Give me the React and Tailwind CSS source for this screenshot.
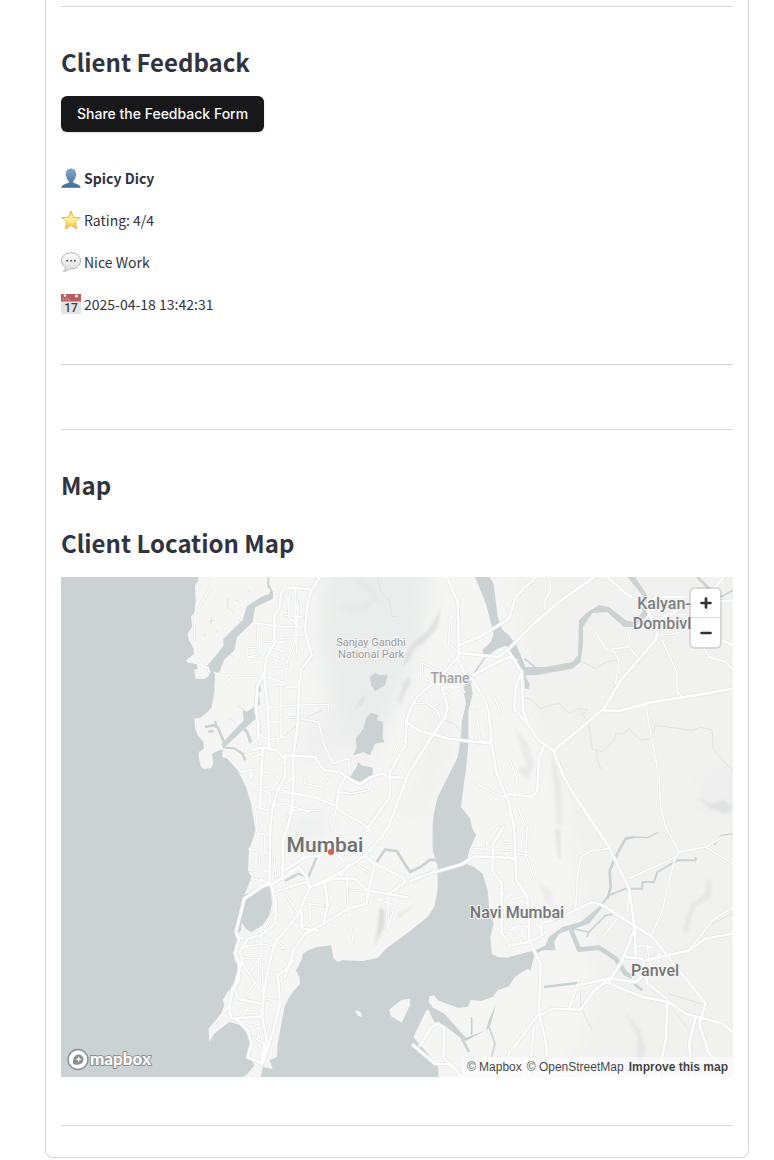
import React from "react";

/* Map geometry is drawn on a grid three times finer than the visible map. */
const LAND = [
  "M412,0 412,12 402,25 404,70 400,110 390,118 393,150 380,170 383,188 398,215 398,232 375,250 380,257 408,262 410,275 400,278 403,305 430,306 443,298 447,280 438,268 487,208 487,185 545,130 558,88 600,60 625,50 628,40 618,28 620,0Z",
  "M625,0 624,22 636,45 636,65 600,82 582,92 575,135 528,180 520,220 490,248 475,285 462,290 460,345 452,390 440,405 415,424 400,424 403,455 410,475 428,495 428,515 414,525 413,540 420,570 430,576 450,573 457,560 453,530 475,520 485,517 483,540 500,545 530,580 555,630 570,680 580,740 583,755 578,780 565,815 562,885 572,900 550,955 600,928 628,928 633,980 625,1015 605,1045 570,1065 555,1055 542,1037 540,1060 525,1075 535,1090 520,1130 520,1150 530,1165 530,1200 532,1215 515,1230 500,1245 485,1268 490,1285 480,1310 443,1355 445,1395 460,1370 505,1335 540,1345 565,1380 570,1410 560,1440 575,1455 580,1465 560,1490 545,1500 600,1500 605,1470 635,1475 625,1450 648,1440 650,1400 665,1320 672,1285 685,1260 695,1245 718,1220 715,1200 705,1180 722,1150 725,1130 745,1118 770,1110 810,1105 818,1145 830,1155 845,1150 905,1152 950,1143 975,1115 1050,1060 1100,1020 1120,990 1130,940 1130,870 1115,820 1115,750 1118,710 1130,660 1160,600 1190,540 1200,480 1203,430 1215,380 1208,345 1213,320 1235,290 1270,240 1265,220 1290,195 1298,170 1275,80 1242,0Z",
  "M1285,0 1298,20 1310,120 1325,160 1350,200 1310,215 1275,240 1245,285 1230,320 1235,350 1222,400 1222,500 1215,580 1210,610 1200,690 1228,725 1232,750 1245,775 1225,820 1215,860 1240,870 1265,890 1280,940 1285,1000 1298,1040 1288,1080 1292,1130 1310,1140 1344,1142 1420,1120 1420,1135 1410,1170 1375,1190 1355,1205 1344,1228 1310,1240 1295,1260 1260,1272 1230,1268 1220,1290 1190,1292 1130,1270 1120,1255 1105,1258 1103,1275 1115,1290 1095,1302 1057,1380 1100,1430 1132,1470 1132,1500 2016,1500 2016,0Z",
  "M882,1298 900,1306 903,1320 890,1316Z",
  "M984,1298 1022,1268 1047,1265 1047,1285 1022,1337 990,1318Z",
];

const WATER_AREAS = [
  "M583,388 585,425 550,455 497,505 487,515 482,500 548,430 545,400 558,404Z",
  "M927,300 942,288 960,295 980,293 972,325 942,343 930,325Z",
  "M917,420 930,407 952,415 947,430 967,435 965,480 970,495 942,500 927,535 907,525 877,535 887,510 884,485 907,455Z",
  "M892,555 900,565 935,572 935,597 907,618 877,608 867,600 884,575Z",
  "M1300,150 1325,160 1344,175 1364,200 1394,270 1454,270 1534,255 1551,235 1554,130 1580,105 1614,85 1644,90 1694,130 1719,135 1744,105 1744,55 1699,0 1722,0 1756,50 1759,115 1719,150 1689,150 1639,105 1594,108 1566,150 1566,200 1559,255 1534,275 1424,295 1389,295 1364,260 1335,205 1310,205 1277,235 1267,215 1297,195Z",
  "M1389,290 1406,320 1404,335 1392,335Z",
  "M1344,1140 1404,1125 1424,1120 1454,1105 1464,1080 1504,1050 1559,1035 1614,990 1629,985 1584,1040 1544,1053 1494,1070 1479,1095 1484,1120 1444,1120 1419,1135 1409,1180 1384,1170 1344,1225Z",
  "M1102,1298 1112,1290 1150,1310 1205,1372 1215,1382 1275,1360 1283,1330 1305,1280 1290,1340 1282,1355 1215,1392 1195,1380 1150,1345 1120,1335Z",
];

const WATER_LINES = [
  [8, "M432,450 455,445 470,450 490,498 M442,463 458,462 M463,432 466,450"],
  [9, "M545,452 558,465 570,498"],
  [7, "M490,512 520,514 545,530 553,550"],
  [5, "M595,320 597,345 M592,360 595,385 M594,430 597,475"],
  [8, "M947,855 972,818 1007,822 1047,885 1082,868 1107,848 1130,850"],
  [7, "M672,912 712,890 742,900 767,840"],
  [5, "M1232,1320 1232,1375 M1282,1345 1302,1400 1292,1440"],
  [8, "M1202,1382 1224,1425"],
  [8, "M1909,0 1944,35"],
  [5, "M1979,60 2016,40"],
  [6, "M1615,990 1644,955 1694,935 1744,935 1744,915 1779,915 1789,885 1824,865 1850,850 1904,850 1904,840"],
  [8, "M1640,965 1649,930 1646,880 1669,830 1694,785 1719,780"],
  [4, "M1719,780 1760,782 1794,765 M1960,805 1980,775 2016,770"],
  [14, "M1530,1058 1554,1118 1614,1112 1664,1145 1694,1190 1714,1200"],
  [5, "M1534,1055 1584,1065 1634,1015 1654,1012 M1584,1065 1578,1080 M1390,245 1424,272"],
  [8, "M1449,1230 1549,1218 M1719,1220 1744,1240"],
  [12, "M1213,325 1222,360"],
];

const MAJOR = [
  "M672,30 660,50 655,95 640,115 640,200 615,245 610,300 620,390 625,515",
  "M610,285 588,330 585,400 592,440 592,480 575,500",
  "M570,520 600,512 620,515 645,520 672,545 672,600 650,640 635,690 628,750 625,920",
  "M605,515 597,690",
  "M672,30 752,38 777,0 M752,38 740,75 732,160 752,235 722,275 714,320 710,440 697,540 697,640 692,700 680,750 665,790 665,905",
  "M672,535 762,540 787,578 837,585 872,610 897,622 922,605 962,588 982,600 1027,602",
  "M672,645 762,660 827,688 842,705 907,740 930,765",
  "M1157,0 1190,75 1194,230 1187,245 1127,310 1072,355 1052,385 1035,435 1035,500 987,585 987,660 922,750",
  "M1194,205 1260,178 1344,125",
  "M1194,228 1312,240 1344,215 1424,135 1494,75 1599,0",
  "M1192,250 1212,290 1237,310 1272,370 1284,410 1292,500 1307,590 1344,680 1359,750 1366,910 1399,960 1406,1095 1439,1160 1434,1310 1344,1430 1330,1500",
  "M1237,295 1290,265 1344,240 1364,250",
  "M1142,330 1160,390 1152,420 1112,480 1042,590 982,750 962,780 912,835 832,890 747,930 712,1010 672,1060",
  "M1035,435 1072,460 1162,485 1287,500",
  "M852,600 832,640 827,690",
  "M1344,225 1382,285 1364,330 1359,395 1404,445 1429,485 1477,522",
  "M1382,285 1386,400 1404,445",
  "M1477,522 1629,395 1679,310 1784,190 1789,165 1769,120 1759,95",
  "M1477,522 1509,600 1544,660 1604,750 1644,810 1704,935 1722,1060 1724,1135",
  "M1624,400 1674,402 1774,375 1934,350 2016,335",
  "M1449,508 1434,540 1429,640 1414,660 1344,650",
  "M1639,0 1694,50 1759,85 1784,60 1874,60",
  "M1344,125 1364,60 1424,0 M1989,0 1944,50 M1789,130 1889,80 2016,70 M1984,190 2016,205",
  "M625,920 605,928 550,965 525,1065 530,1080 545,1085",
  "M660,905 630,925 645,975 643,1040 600,1075 560,1085 535,1125 545,1150 520,1230 530,1265 600,1280",
  "M535,1085 522,1130 535,1160 532,1215 515,1235 505,1290 510,1325 605,1318",
  "M672,1060 640,1100 620,1180 610,1240 603,1320 618,1390 600,1460",
  "M697,1150 672,1180 650,1195 658,1280 625,1400 605,1460 560,1440 572,1400 560,1360 525,1325",
  "M672,935 732,915 747,930 737,900 712,870 672,900",
  "M792,920 800,985 787,1040 732,1070 697,1120 672,1200",
  "M787,1040 862,995 917,980 922,940 942,860 1022,900 1034,915 982,950",
  "M747,930 822,905 882,905 917,940 1042,962 M912,835 937,860 M672,880 732,840 782,835 M812,820 852,855",
  "M722,1005 722,1055 772,1060",
  "M1327,750 1297,800 1294,880 1322,920 1322,1070 1344,1095",
  "M1047,912 1112,888 1202,862 1242,838 1344,842 1366,850",
  "M1057,1405 1122,1460 1172,1462 1202,1500",
  "M1077,1405 1112,1350 1132,1340 1150,1355 1147,1440 1172,1470",
  "M1439,1315 1474,1295 1559,1298 1600,1240 1634,1215 1744,1260 1824,1275 1874,1310 1984,1340 2016,1365",
  "M1499,1020 1594,975 1624,985 1774,1080 1934,1280 1914,1340 1944,1430 2000,1480",
  "M1719,1060 1684,1150 1644,1215",
  "M1754,1150 1884,1120 1934,1085 2016,1070",
  "M1694,1140 1744,1145 1759,1220 1819,1265",
  "M1524,1295 1549,1225 1644,1205 1724,1215 1754,1190",
  "M1819,1280 1814,1390 1790,1500 M1904,1320 1884,1400 1894,1500",
  "M1419,1350 1404,1500 M1434,1310 1454,1390 1462,1500",
  "M1344,1105 1406,1095 1444,1075 1439,1040 1499,1020",
];

const MINOR = [
  "M448,0 450,30 415,90 402,110 400,190 405,235 425,268 440,272 445,285",
  "M462,288 480,295 610,295 M515,295 498,318",
  "M565,158 580,138 672,150 M590,140 590,235 558,240 558,212 590,212 M610,193 672,195",
  "M560,240 610,245 M640,215 672,225 M625,240 672,262 M645,255 645,270 672,272",
  "M620,300 672,318 M660,320 660,480 650,490 650,520 M620,325 672,322 M620,390 672,388 M620,435 660,435 M595,470 620,488 672,480",
  "M552,520 575,540 605,530 M500,540 540,585 570,578 640,590 655,610 M565,580 570,605 575,585",
  "M580,640 672,640 M585,690 620,700 628,650 610,640 M583,690 590,750 M672,680 640,685",
  "M672,60 712,90 702,200 M687,35 682,120 717,150 677,260 M672,185 737,185 M702,30 707,230 M672,115 725,120 M672,150 730,148 M715,40 700,130",
  "M672,330 712,330 M672,385 802,382 802,395 M672,420 708,422 M680,265 672,300 M672,570 694,575 M700,600 672,620 M672,680 692,690",
  "M717,425 772,435 792,510 817,560 862,545 867,590",
  "M732,600 732,620 782,630 802,600 M827,688 837,645 872,650 922,640 934,610 M692,700 782,700 M812,750 827,690 M682,710 700,690 745,705",
  "M1167,120 1162,200 1192,225 M1167,120 1190,122 M1082,258 1142,285 M1084,258 1084,305 1122,320 M1057,380 1102,380 1127,400 1137,420",
  "M1100,355 1095,375 1115,390 1130,380 M1142,330 1200,330 1210,345 M1180,330 1150,355 M1165,265 1185,300 1180,330",
  "M1242,400 1252,450 1257,490 1287,495 M1300,360 1320,410 M1247,620 1322,660 1344,655 M997,530 1012,495 1037,490",
  "M1804,190 1849,290 1849,345 1864,360 M1754,385 1794,600 1799,690 1814,750",
  "M1664,320 1674,250 1654,215 1704,210 1729,240 M1604,165 1634,215 1654,225 M1699,165 1709,195 1699,210",
  "M1464,0 1469,40 1452,70 1452,100 M1944,240 1994,255 2016,280 M1930,215 1945,240 M1344,540 1354,570 1369,610 1355,650 1394,750 M1344,700 1359,750 M1789,175 1844,170 1889,150 M1784,115 1890,112",
  "M585,750 590,770 625,775 M565,815 620,830 M568,815 565,880 620,882 M595,835 595,880 M572,905 620,915 M575,925 605,905 M610,770 612,825",
  "M640,850 645,900 M640,945 672,935 M545,1110 600,1100 665,1115 M545,1145 600,1145 M540,1150 580,1215 605,1250 M600,1060 600,1135 565,1190",
  "M605,1155 605,1310 M540,1270 580,1220 M550,1300 605,1300 M610,1265 655,1275 M500,1290 450,1355 462,1362 505,1330 M550,1340 570,1350 595,1340 590,1390 M575,1380 610,1400 600,1440 M618,1190 650,1190 M600,1050 672,1115 M540,1320 560,1290",
  "M637,935 638,1000 612,1050 580,1075",
  "M817,780 887,780 922,760 M887,865 922,885 M822,860 842,895 862,860 M857,900 862,1000 877,1095 M937,965 1007,965 997,1000 982,1050 M982,950 982,1060 M942,965 1007,985 M867,940 917,940 M732,980 787,985 M747,980 747,1030 722,1050 M672,950 712,1010 M980,980 1000,982",
  "M1237,815 1344,820 M1312,750 1277,800 1277,840 M1325,800 1344,800 M1322,950 1344,950",
  "M1644,815 1594,820 1559,840 1549,900 1544,990 M1704,905 1844,840 1854,825 1814,750 M1854,825 1934,810 1984,780 M1844,840 1824,910 1804,1000 1769,1080",
  "M1534,990 1554,998 M1344,840 1366,845 M1399,750 1394,835 1419,905 M1719,1105 1774,1110 M1754,1080 1774,1200 M1934,810 2016,860 M2016,990 1954,1030 1924,1070 1884,1120",
  "M1344,950 1394,980 M1344,1030 1384,1100 M1629,1075 1669,1025 M1704,940 1699,1020 M1344,970 1394,955 M1370,830 1400,835 M1345,1060 1375,1045 1400,1050 M1370,990 1390,960 M1420,1035 1445,1060 M1770,1150 1800,1130",
];

const FINE =
  "M1389,360 1414,370 1439,395 1464,385 1494,380 1524,410 1554,395 1584,440 1594,515 1624,525 1660,490 1664,470 1690,470 1704,455 1739,490 1769,485 1784,445 1894,460 1920,450 1954,460 1956,515 2016,585 M1564,255 1604,275 1634,255 1669,250 M1606,520 1609,550 1619,575 M1560,395 1580,400 1560,415 M672,475 722,430 782,400 M950,0 960,45 987,75 992,118 1007,118 M1150,430 1180,440 1200,465 M1559,1240 1559,1290 1594,1360 M1824,1250 1919,1280 1934,1270 M1834,1295 1884,1360 M1954,1040 2016,1010 M500,65 500,90 515,103 M452,120 450,140 M445,133 460,130 M465,158 470,165 M430,170 432,178 M525,70 535,74 M560,40 568,43 M510,235 515,240 M535,130 540,135 M530,385 550,400 M507,425 525,440";

const HILLS = [
  ["#eaedeb", "M790,-60 1110,-60 1090,140 1050,260 1000,400 920,560 850,500 800,350 770,180Z"],
  ["#f1f1f0", "M1120,330 1190,420 1150,600 1110,700 1020,740 1060,560Z"],
  ["#f1f1f0", "M1350,-60 2080,-60 2080,1560 1500,1560 1600,1240 1560,960 1500,640 1400,420Z"],
  ["#eeefee", "M700,480 800,400 870,440 830,560 760,560Z"],
  ["#edeeed", "M1960,580 2060,560 2060,720 1960,680 1900,670Z"],
  ["#ebeded", "M672,740 805,705 800,765 690,790Z"],
];

const RIDGES = [
  ["#dfe1e0", "M1140,90 1130,150 1085,200 1060,215 1045,250 1025,270 1035,230 1060,190 1100,165Z"],
  ["#dfe1e0", "M1045,300 1050,315 1030,350 1015,385 1012,370 1030,315Z"],
  ["#dcdedd", "M905,355 915,360 900,385 880,400 895,375Z"],
  ["#dbdddc", "M955,990 972,1000 970,1050 950,1090 940,1110 950,1050Z"],
  ["#e7e8e7", "M1470,540 1482,560 1500,620 1502,740 1488,750 1482,650Z"],
  ["#e9eae9", "M1360,450 1400,500 1420,560 1400,610 1370,580 1395,560 1375,500Z"],
  ["#e0e2e1", "M1904,660 1950,680 1990,670 2016,690 2000,710 1950,695Z"],
  ["#e5e7e6", "M1480,755 1500,755 1500,850 1490,840Z"],
  ["#e5e7e6", "M1940,900 1955,920 1950,960 1900,990 1880,1070 1865,1060 1890,980 1930,950Z"],
  ["#e5e7e6", "M1690,1300 1740,1360 1755,1420 1740,1470 1725,1440 1730,1380Z"],
  ["#ecedec", "M1430,910 1470,940 1480,1000 1455,980Z"],
  ["#e6e9e7", "M830,90 900,80 950,60 920,100 870,110Z"],
  ["#e6e9e7", "M870,0 930,20 970,90 930,60Z"],
  ["#e6e8e7", "M1010,1010 1060,985 1050,995 1010,1025Z"],
];

const LABELS = [
  { text: "Sanjay Gandhi", x: 310, y: 69, cls: "text-[11px] fill-[#9c9e9e] font-normal" },
  { text: "National Park", x: 310, y: 81, cls: "text-[11px] fill-[#9c9e9e] font-normal" },
  { text: "Thane", x: 389, y: 106, cls: "text-[14px] fill-[#a2a4a4]" },
  { text: "Kalyan-", x: 603, y: 32, cls: "text-[16px] fill-[#7d7f7f]" },
  { text: "Dombivli", x: 603, y: 52, cls: "text-[16px] fill-[#7d7f7f]" },
  { text: "Mumbai", x: 264, y: 275, cls: "text-[21px] fill-[#6f7171]" },
  { text: "Navi Mumbai", x: 456, y: 341, cls: "text-[16px] fill-[#747676]" },
  { text: "Panvel", x: 594, y: 399, cls: "text-[16px] fill-[#747676]" },
];

function MapDrawing() {
  return (
    <svg
      viewBox="0 0 672 500"
      preserveAspectRatio="xMidYMid slice"
      className="block h-full w-full"
      role="img"
      aria-label="Map of Mumbai"
    >
      <defs>
        <filter id="soft" x="-20%" y="-20%" width="140%" height="140%">
          <feGaussianBlur stdDeviation="28" />
        </filter>
        <filter id="ridge" x="-30%" y="-30%" width="160%" height="160%">
          <feGaussianBlur stdDeviation="5" />
        </filter>
        <clipPath id="land">
          {LAND.map((d) => (
            <path key={d} d={d} />
          ))}
        </clipPath>
      </defs>
      <rect width="672" height="500" fill="#cad2d3" />
      <g transform="scale(0.333333)" strokeLinejoin="round" strokeLinecap="round">
        <g fill="#f5f5f4">
          {LAND.map((d) => (
            <path key={d} d={d} />
          ))}
        </g>
        <g clipPath="url(#land)">
          <g filter="url(#soft)">
            {HILLS.map(([c, d]) => (
              <path key={d} d={d} fill={c} />
            ))}
          </g>
          <g filter="url(#ridge)">
            {RIDGES.map(([c, d]) => (
              <path key={d} d={d} fill={c} />
            ))}
          </g>
        </g>
        <g fill="#cad2d3">
          {WATER_AREAS.map((d) => (
            <path key={d} d={d} />
          ))}
        </g>
        <g fill="none" stroke="#cad2d3" strokeLinecap="butt">
          {WATER_LINES.map(([w, d]) => (
            <path key={d} d={d} strokeWidth={w} />
          ))}
        </g>
        <path d={FINE} fill="none" stroke="#d8dcdc" strokeWidth="2" />
        <g fill="none" stroke="#e6e9e9">
          {MINOR.map((d) => (
            <path key={d} d={d} strokeWidth="8" />
          ))}
          {MAJOR.map((d) => (
            <path key={d} d={d} strokeWidth="12" />
          ))}
        </g>
        <g fill="none" stroke="#ffffff">
          {MINOR.map((d) => (
            <path key={d} d={d} strokeWidth="4" />
          ))}
          {MAJOR.map((d) => (
            <path key={d} d={d} strokeWidth="7" />
          ))}
        </g>
      </g>
      <g
        className="font-['Roboto',sans-serif] font-medium"
        textAnchor="middle"
        stroke="#f5f5f4"
        strokeWidth="2"
        strokeLinejoin="round"
        paintOrder="stroke"
      >
        {LABELS.map((l) => (
          <text key={l.text} x={l.x} y={l.y} className={l.cls}>
            {l.text}
          </text>
        ))}
      </g>
      <circle cx="270" cy="275" r="3" fill="#d9604c" />
    </svg>
  );
}

function MapboxLogo() {
  return (
    <svg viewBox="0 0 88 23" className="block h-[23px] w-[88px]" role="img" aria-label="Mapbox logo">
      <circle cx="11" cy="11.5" r="10" fill="#fff" stroke="#899192" strokeWidth="1.4" />
      <path
        d="M6.2 16.3C5.6 12.800 6 9.900 8 7.900A5 5 0 0 1 15 7.900A5 5 0 0 1 15 14.900C13 16.800 9.800 17 6.200 16.300Z"
        fill="#899192"
      />
      <path d="M11.700 8.200 12.600 10.400 14.800 11.300 12.600 12.200 11.700 14.400 10.800 12.200 8.600 11.300 10.800 10.400Z" fill="#fff" />
      <text
        x="23"
        y="17"
        className="fill-white font-['Lato',sans-serif] text-[17px] font-black"
        stroke="#899192"
        strokeWidth="2"
        strokeLinejoin="round"
        paintOrder="stroke"
      >
        mapbox
      </text>
    </svg>
  );
}

function PersonIcon() {
  return (
    <svg viewBox="0 0 20 20" className="h-5 w-5 shrink-0" aria-hidden="true">
      <defs>
        <linearGradient id="person" x1="0" y1="0" x2="0" y2="1">
          <stop offset="0" stopColor="#83a9ca" />
          <stop offset="1" stopColor="#416f99" />
        </linearGradient>
      </defs>
      <path
        d="M10 .4C6.700.4 4.900 2.700 5 5.900C4.400 6.300 4.600 7.900 5.300 8.500C5.700 10.700 6.600 12.200 7.700 13.100V14.700C6 15.500 1 16.100.3 19.700H19.700C19 16.100 14 15.500 12.300 14.700V13.100C13.400 12.200 14.300 10.700 14.700 8.500C15.400 7.900 15.600 6.300 15 5.900C15.100 2.700 13.300.4 10 .4Z"
        fill="url(#person)"
      />
    </svg>
  );
}

function StarIcon() {
  return (
    <svg viewBox="0 0 20 20" className="h-5 w-5 shrink-0" aria-hidden="true">
      <defs>
        <linearGradient id="star" x1="0" y1="0" x2="0" y2="1">
          <stop offset="0" stopColor="#ffd84a" />
          <stop offset=".5" stopColor="#fff3a0" />
          <stop offset="1" stopColor="#fbb828" />
        </linearGradient>
      </defs>
      <path
        d="M10 .9 12.500 7.300 19.400 7.600 14 12 15.900 18.900 10 15.200 4.100 18.900 6 12 .6 7.600 7.500 7.300Z"
        fill="url(#star)"
        stroke="#e9a72b"
        strokeWidth=".8"
        strokeLinejoin="round"
      />
    </svg>
  );
}

function SpeechIcon() {
  return (
    <svg viewBox="0 0 20 20" className="h-5 w-5 shrink-0" aria-hidden="true">
      <defs>
        <linearGradient id="speech" x1="0" y1="0" x2="0" y2="1">
          <stop offset="0" stopColor="#ffffff" />
          <stop offset="1" stopColor="#dcdcdc" />
        </linearGradient>
      </defs>
      <path
        d="M10 .8C4.500.8.5 4.200.5 8.700C.5 11.700 2.200 14.300 4.800 15.700C4.700 17.300 3.700 18.500 2.300 19.300C5 19.300 7 18.300 8.300 16.800C15 17.300 19.500 13.600 19.500 8.700C19.500 4.200 15.500.8 10 .8Z"
        fill="url(#speech)"
        stroke="#a9a9a9"
        strokeWidth=".9"
      />
      <circle cx="6.200" cy="8.800" r=".95" fill="#555" />
      <circle cx="10" cy="8.800" r=".95" fill="#555" />
      <circle cx="13.800" cy="8.800" r=".95" fill="#555" />
    </svg>
  );
}

function CalendarIcon() {
  return (
    <svg viewBox="0 0 20 20" className="h-5 w-5 shrink-0" aria-hidden="true">
      <rect width="20" height="20" fill="#e4e4e4" />
      <rect width="20" height="7.500" fill="#b85f61" />
      <path d="M2.500 6V4M5 6V4M7.300 4V6H9" stroke="#d29a9b" strokeWidth=".9" fill="none" />
      <circle cx="4" cy="1.500" r="1.200" fill="#fff" />
      <circle cx="15.500" cy="2" r="1.500" fill="#fff" />
      <text x="10" y="18" textAnchor="middle" className="fill-[#3c3c3c] font-['Roboto',sans-serif] text-[12px] font-medium">
        17
      </text>
    </svg>
  );
}

function FeedbackRow({ icon, children }) {
  return (
    <li className="flex items-center gap-[3px]">
      {icon}
      {children}
    </li>
  );
}

const headingClass = "text-[24px] leading-[34px] font-bold text-[#31333f]";
const ruleClass = "border-t border-[#d6d6d9]";

export default function App() {
  return (
    <div className="bg-white pr-[25px] pb-0.5 pl-[45px] font-['Noto_Sans_CJK_SC','Open_Sans',sans-serif] text-[#31333f]">
      <main className="rounded-b-lg border border-t-0 border-[#d6d6d9] px-[15px] pt-1.5 pb-[31px]">
        <hr className={ruleClass} />

        <section className="pt-[38px]">
          <h2 className={headingClass}>Client Feedback</h2>
          <button
            type="button"
            className="mt-[17px] block h-9 rounded-md bg-[#18181b] px-4 font-['Inter',sans-serif] text-[14px] leading-5 font-medium text-[#fafafa] shadow-sm"
          >
            Share the Feedback Form
          </button>
          <ul className="mt-[33px] flex flex-col gap-4 text-[14px] leading-[26px]">
            <FeedbackRow icon={<PersonIcon />}>
              <strong className="font-bold">Spicy Dicy</strong>
            </FeedbackRow>
            <FeedbackRow icon={<StarIcon />}>Rating: 4/4</FeedbackRow>
            <FeedbackRow icon={<SpeechIcon />}>Nice Work</FeedbackRow>
            <FeedbackRow icon={<CalendarIcon />}>2025-04-18 13:42:31</FeedbackRow>
          </ul>
        </section>

        <hr className={`mt-[47px] ${ruleClass}`} />
        <hr className={`mt-16 ${ruleClass}`} />

        <section className="pt-[38px]">
          <h2 className={headingClass}>Map</h2>
          <h2 className={`mt-6 ${headingClass}`}>Client Location Map</h2>
          <div className="relative mt-[17px] h-[500px] overflow-hidden">
            <MapDrawing />
            <div className="absolute top-3 right-[13px] flex w-[29px] flex-col divide-y divide-[#ddd] overflow-hidden rounded bg-white ring-2 ring-black/10">
              <button type="button" aria-label="Zoom in" className="flex h-[29px] items-center justify-center">
                <svg viewBox="0 0 12 12" className="h-3 w-3" aria-hidden="true">
                  <path d="M6 1.500V10.500M1.500 6H10.500" stroke="#333" strokeWidth="2.700" strokeLinecap="round" />
                </svg>
              </button>
              <button type="button" aria-label="Zoom out" className="flex h-[29px] items-center justify-center">
                <svg viewBox="0 0 12 12" className="h-3 w-3" aria-hidden="true">
                  <path d="M1.500 6H10.500" stroke="#333" strokeWidth="2.700" strokeLinecap="round" />
                </svg>
              </button>
            </div>
            <a href="#mapbox" className="absolute bottom-1.5 left-1.5">
              <MapboxLogo />
            </a>
            <div className="absolute right-0 bottom-0 flex h-5 items-center gap-[5px] bg-white/50 px-[5px] font-['Liberation_Sans',sans-serif] text-[12px] leading-5 text-black/75">
              <a href="#about-mapbox">© Mapbox</a>
              <a href="#openstreetmap">© OpenStreetMap</a>
              <a href="#improve" className="font-bold">
                Improve this map
              </a>
            </div>
          </div>
        </section>

        <hr className={`mt-12 ${ruleClass}`} />
      </main>
    </div>
  );
}
